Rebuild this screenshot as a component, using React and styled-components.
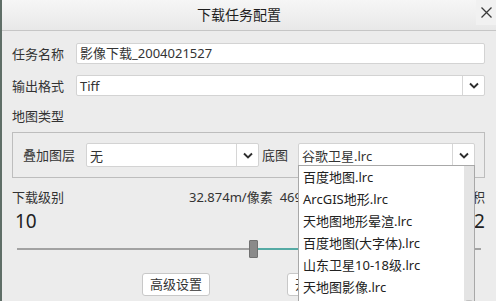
import React from 'react';
import styled, { createGlobalStyle } from 'styled-components';

const Global = createGlobalStyle`
  html, body { margin: 0; padding: 0; background: #ececec; }
  #root { width: 496px; height: 301px; overflow: hidden; }
  * { box-sizing: border-box; }
`;

const Window = styled.div`
  width: 496px;
  height: 301px;
  overflow: hidden;
  display: flex;
  flex-direction: column;
  background: #ececec;
  border-left: 2px solid #5f6e67;
  font-family: "Noto Sans", "Noto Sans CJK SC", sans-serif;
  font-size: 13px;
  color: #333;
`;

const TitleBar = styled.div`
  height: 31px;
  flex: none;
  display: flex;
  align-items: flex-start;
  background: linear-gradient(#f6f6f6, #e8e8e8);
  border-bottom: 1px solid #c6c6c6;
`;

const Title = styled.div`
  flex: 1;
  height: 30px;
  line-height: 30px;
  text-align: center;
  font-size: 14px;
  color: #1e1e1e;
`;

const CloseButton = styled.div`
  width: 20px;
  height: 25px;
  display: flex;
  align-items: center;
  justify-content: center;
  background: #f1f1f1;
`;

const Body = styled.div`
  flex: 1;
  display: flex;
  flex-direction: column;
  padding: 12px 11px 0 10px;
`;

const FormRow = styled.div`
  display: grid;
  grid-template-columns: 64px 1fr;
  align-items: center;
  height: 21px;
  & + & { margin-top: 11px; }
`;

const Label = styled.span`
  line-height: 20px;
  color: #333;
  white-space: nowrap;
`;

const TextInput = styled.div`
  height: 21px;
  line-height: 19px;
  padding: 0 3px;
  background: #fff;
  border: 1px solid #d3d3d3;
  border-radius: 2px;
  color: #333;
`;

const Select = styled.div`
  position: relative;
  display: flex;
  height: ${p => p.$h || 21}px;
  width: ${p => (p.$w ? `${p.$w}px` : 'auto')};
  flex: ${p => (p.$w ? 'none' : '1')};
  background: #fff;
  border: 1px solid #d3d3d3;
  border-radius: 2px;
`;

const SelectValue = styled.div`
  flex: 1;
  padding: 0 3px;
  display: flex;
  align-items: center;
  color: #333;
  white-space: nowrap;
  overflow: hidden;
`;

const DropButton = styled.div`
  width: 22px;
  flex: none;
  display: flex;
  align-items: center;
  justify-content: center;
  border-left: 1px solid #d6d6d6;
`;

const SectionLabel = styled.div`
  margin-top: 10px;
  line-height: 20px;
`;

const GroupBox = styled.div`
  margin-top: 6px;
  display: flex;
  align-items: center;
  border: 1px solid #bdbdbd;
  padding: 10px 9px 10px 10px;
`;

const GroupLabel = styled.span`
  line-height: 20px;
  white-space: nowrap;
  margin-left: ${p => p.$ml || 0}px;
  margin-right: ${p => p.$mr || 0}px;
`;

const DropList = styled.div`
  position: absolute;
  top: calc(100% - 1px);
  left: -1px;
  right: -1px;
  height: 156px;
  display: flex;
  background: #fff;
  border: 1px solid #a8a8a8;
  z-index: 5;
`;

const Items = styled.div`
  flex: 1;
  display: flex;
  flex-direction: column;
  overflow: hidden;
`;

const Item = styled.div`
  height: 22px;
  line-height: 22px;
  flex: none;
  padding-left: 4px;
  color: #222;
  white-space: nowrap;
`;

const ScrollTrack = styled.div`
  width: 10px;
  flex: none;
  background: #e4e4e4;
  display: flex;
  flex-direction: column;
  justify-content: flex-end;
  padding: 0 1px;
`;

const ScrollThumb = styled.div`
  height: 20px;
  background: #c0c0c0;
  border-radius: 3px;
`;

const LevelHeader = styled.div`
  margin-top: 11px;
  display: grid;
  grid-template-columns: 170px auto auto 1fr;
  column-gap: 7px;
  line-height: 16px;
  white-space: nowrap;
`;

const RightText = styled.span`
  text-align: right;
`;

const NumberRow = styled.div`
  margin-top: 4px;
  display: flex;
  justify-content: space-between;
  padding-left: 3px;
  font-size: 19px;
  line-height: 24px;
  color: #222;
`;

const Slider = styled.div`
  position: relative;
  margin: 7px 4px 0 5px;
  height: 18px;
`;

const Rail = styled.div`
  position: absolute;
  left: 0;
  right: 0;
  top: 8px;
  height: 2px;
  background: linear-gradient(
    to right,
    #a2a2a2 0 ${p => p.$from}%,
    #55aaa4 ${p => p.$from}% ${p => p.$to}%,
    #a2a2a2 ${p => p.$to}% 100%
  );
`;

const Handle = styled.div`
  position: absolute;
  top: 0;
  width: 9px;
  height: 18px;
  background: #8a8a8a;
  border: 1px solid #717171;
  border-radius: 1px;
`;

const ButtonRow = styled.div`
  margin-top: 15px;
  display: flex;
  justify-content: center;
  gap: 77px;
`;

const Button = styled.div`
  width: 68px;
  height: 23px;
  line-height: 21px;
  text-align: center;
  background: #fff;
  border: 1px solid #c8c8c8;
  border-radius: 3px;
  color: #333;
`;

const Chevron = () => (
  <svg width="10" height="7" viewBox="0 0 10 7">
    <polyline points="1,1.5 5,5.5 9,1.5" fill="none" stroke="#2e2e2e" strokeWidth="1.9" />
  </svg>
);

const CloseIcon = () => (
  <svg width="11" height="11" viewBox="0 0 11 11">
    <path d="M0.5 0.5 L10.5 10.5 M10.5 0.5 L0.5 10.5" stroke="#3a3a3a" strokeWidth="1.3" />
  </svg>
);

const baseMaps = [
  '百度地图.lrc',
  'ArcGIS地形.lrc',
  '天地图地形晕渲.lrc',
  '百度地图(大字体).lrc',
  '山东卫星10-18级.lrc',
  '天地图影像.lrc',
  '谷歌卫星.lrc',
];

export default function App() {
  const lo = 51;
  const hi = 88;
  return (
    <>
      <Global />
      <Window>
        <TitleBar>
          <Title>下载任务配置</Title>
          <CloseButton><CloseIcon /></CloseButton>
        </TitleBar>
        <Body>
          <FormRow>
            <Label>任务名称</Label>
            <TextInput>影像下载_2004021527</TextInput>
          </FormRow>
          <FormRow>
            <Label>输出格式</Label>
            <Select>
              <SelectValue>Tiff</SelectValue>
              <DropButton><Chevron /></DropButton>
            </Select>
          </FormRow>
          <SectionLabel>地图类型</SectionLabel>
          <GroupBox>
            <GroupLabel $mr={11}>叠加图层</GroupLabel>
            <Select $w={173} $h={24}>
              <SelectValue>无</SelectValue>
              <DropButton><Chevron /></DropButton>
            </Select>
            <GroupLabel $ml={3} $mr={10}>底图</GroupLabel>
            <Select $h={24}>
              <SelectValue>谷歌卫星.lrc</SelectValue>
              <DropButton><Chevron /></DropButton>
              <DropList>
                <Items>
                  {baseMaps.map(m => <Item key={m}>{m}</Item>)}
                </Items>
                <ScrollTrack><ScrollThumb /></ScrollTrack>
              </DropList>
            </Select>
          </GroupBox>
          <LevelHeader>
            <span>下载级别</span>
            <span>32.874m/像素</span>
            <span>4696张</span>
            <RightText>面积</RightText>
          </LevelHeader>
          <NumberRow>
            <span>10</span>
            <span>12</span>
          </NumberRow>
          <Slider>
            <Rail $from={lo} $to={hi} />
            <Handle style={{ left: `calc(${lo}% - 4.5px)` }} />
            <Handle style={{ left: `calc(${hi}% - 4.5px)` }} />
          </Slider>
          <ButtonRow>
            <Button>高级设置</Button>
            <Button>开始下载</Button>
          </ButtonRow>
        </Body>
      </Window>
    </>
  );
}
